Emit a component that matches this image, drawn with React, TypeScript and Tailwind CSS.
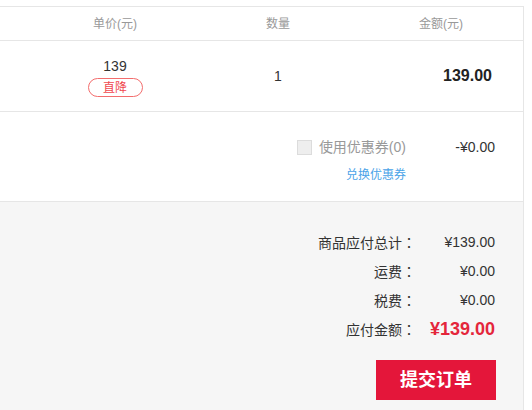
import React from "react";

function Colon() {
  return <span style={{ fontFamily: "'Noto Sans CJK TC', sans-serif" }}>：</span>;
}

export default function App() {
  return (
    <div
      className="w-[532px] h-[410px] overflow-hidden bg-white pt-[6px] text-[#333]"
      style={{ fontFamily: "'Liberation Sans', 'Noto Sans CJK SC', sans-serif" }}
    >
      <div className="w-[524px] border-t border-r border-[#e6e6e6]">
        {/* header */}
        <div className="flex h-[34px] items-center border-b border-[#e6e6e6] text-[12px] text-[#999]">
          <div className="w-[230px] text-center">单价(元)</div>
          <div className="w-[96px] text-center">数量</div>
          <div className="ml-[64px] w-[102px] text-center">金额(元)</div>
        </div>

        {/* item row */}
        <div className="flex h-[71px] border-b border-[#e6e6e6]">
          <div className="flex w-[230px] flex-col items-center pt-[17px]">
            <div className="text-[14px] leading-[16px] text-[#333]">139</div>
            <div className="mt-[4px] flex h-[19px] w-[55px] items-center justify-center rounded-full border border-[#f36d6d] text-[12px] leading-none text-[#f0484e]">
              直降
            </div>
          </div>
          <div className="flex w-[96px] items-center justify-center text-[14px]">1</div>
          <div className="ml-[64px] flex w-[102px] items-center justify-end text-[16px] font-bold text-[#222]">
            139.00
          </div>
        </div>

        {/* coupon */}
        <div className="flex h-[90px] flex-col items-end border-b border-[#e6e6e6] pr-[28px] pt-[25px]">
          <div className="flex h-[20px] items-center">
            <div className="h-[15px] w-[15px] border border-[#dcdcdc] bg-[#eeeeee]" />
            <div className="ml-[7px] text-[14px] text-[#999]">使用优惠券(0)</div>
            <div className="w-[89px] text-right text-[14px] text-[#333]">-¥0.00</div>
          </div>
          <div className="mr-[89px] mt-[10px] text-[12px] leading-[16px] text-[#4aa3e8]">兑换优惠券</div>
        </div>

        {/* summary */}
        <div className="flex h-[208px] flex-col items-end bg-[#f6f6f6] pt-[26px]">
          <div className="flex flex-col items-end pr-[28px] text-[14px] text-[#333]">
            <div className="flex h-[29px] items-center">
              <div className="text-right">商品应付总计<Colon /></div>
              <div className="w-[79px] text-right">¥139.00</div>
            </div>
            <div className="flex h-[29px] items-center">
              <div className="text-right">运费<Colon /></div>
              <div className="w-[79px] text-right">¥0.00</div>
            </div>
            <div className="flex h-[29px] items-center">
              <div className="text-right">税费<Colon /></div>
              <div className="w-[79px] text-right">¥0.00</div>
            </div>
            <div className="flex h-[29px] items-center">
              <div className="text-right">应付金额<Colon /></div>
              <div className="w-[79px] text-right text-[18px] font-bold text-[#e4263b]">¥139.00</div>
            </div>
          </div>
          <button className="mr-[27px] mt-[16px] flex h-[40px] w-[120px] items-center justify-center bg-[#e4163a] text-[18px] font-bold text-white">
            提交订单
          </button>
        </div>
      </div>
    </div>
  );
}
